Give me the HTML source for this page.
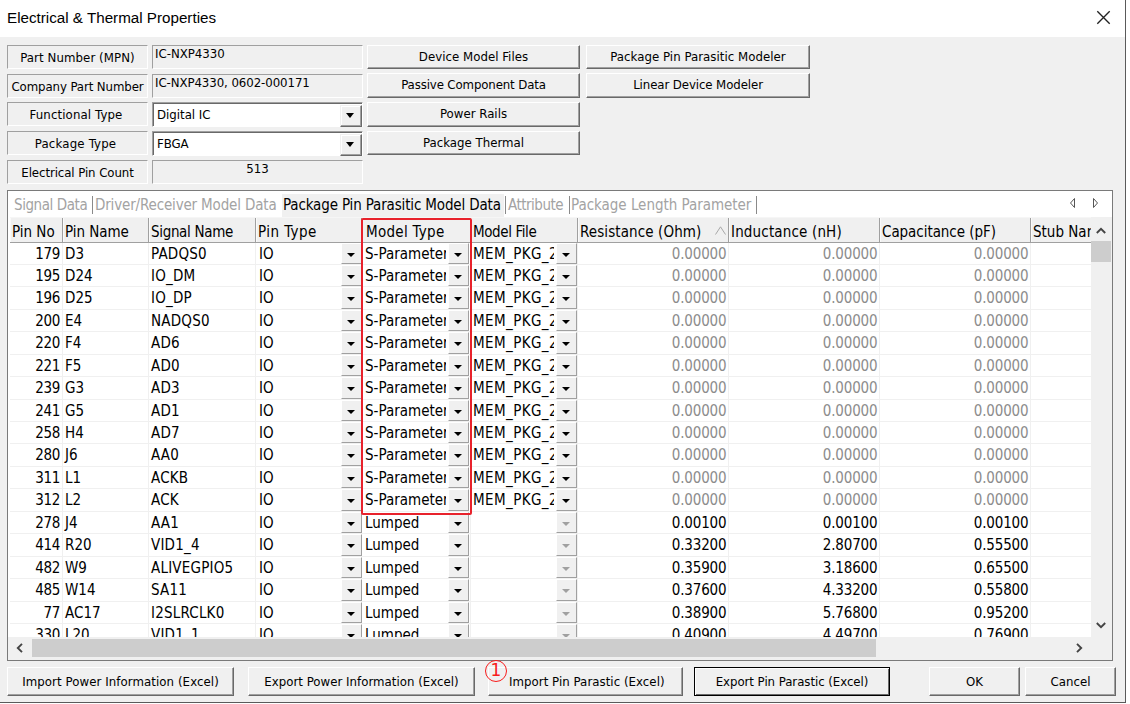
<!DOCTYPE html>
<html lang="en"><head><meta charset="utf-8"><title>Electrical &amp; Thermal Properties</title>
<style>
*{box-sizing:border-box;margin:0;padding:0}
html,body{width:1130px;height:704px;overflow:hidden;background:#fff}
body{position:relative;font-family:"DejaVu Sans Condensed","Liberation Sans",sans-serif;color:#000;font-size:13.1px}
.lbl,.fld,.btn,.combo,.a{position:absolute}
#title{position:absolute;left:0;top:0;width:1125px;height:37px;background:#fff}
#title .t{position:absolute;left:7px;top:8px;font-family:"Liberation Sans",sans-serif;font-size:15.2px;line-height:20px;color:#000;white-space:nowrap}
#client{position:absolute;left:0;top:37px;width:1125px;height:665px;background:#f0f0f0}
#wr{position:absolute;left:1125px;top:0;width:1px;height:703px;background:#5a5a5a}
#wb{position:absolute;left:0;top:702px;width:1126px;height:1px;background:#5a5a5a}
.lbl,.fld{height:24px;border:1px solid;border-color:#a0a0a0 #fff #fff #a0a0a0;background:#f0f0f0;line-height:23px;white-space:nowrap;overflow:hidden}
.lbl{left:7px;width:141px;text-align:center}
.fld{left:152px;width:211px;padding-left:2px;line-height:16px}
.btn{background:#f0f0f0;border:1px solid;border-color:#fff #696969 #696969 #fff;box-shadow:inset -1px -1px 0 #a0a0a0;text-align:center;white-space:nowrap}
.combo{left:152px;width:211px;height:25px;background:#fff;border:1px solid;border-color:#a0a0a0 #fff #fff #a0a0a0;box-shadow:inset 1px 1px 0 #696969;line-height:24px;padding-left:4px;white-space:nowrap}
.combo .cb{position:absolute;right:0;top:2px;width:22px;height:22px;background:#f0f0f0;border:1px solid;border-color:#f0f0f0 #696969 #696969 #f0f0f0;box-shadow:inset -1px -1px 0 #a0a0a0,inset 1px 1px 0 #fff}
.combo .cb:after{content:"";position:absolute;left:5px;top:7px;border:4.5px solid transparent;border-top:5px solid #000;border-bottom:0}
#panel{position:absolute;left:7px;top:190px;width:1106px;height:471px;border:1px solid #7a7a7a;background:#fff}
.tab{position:absolute;top:193px;height:24px;line-height:25px;white-space:nowrap;color:#a3a3a3;font-size:15px}
.tab.sel{color:#000}
#selbg{position:absolute;left:282px;top:194px;width:222px;height:23px;background:#f0f0f0}
.sep{position:absolute;top:196px;width:1px;height:18px;background:#8a8a8a}
#hdr{position:absolute;left:10px;top:218px;width:1081px;height:25px;background:#f0f0f0;box-shadow:0 -1px 0 #f6f6f6;border-bottom:1px solid #a0a0a0;font-size:15px;line-height:28px;white-space:nowrap}
#hdr span.h{position:absolute;top:0;height:24px;border-right:1px solid #a0a0a0;padding-left:2px;overflow:hidden;box-shadow:inset 1px 0 0 #fafafa}
.grid{position:absolute;left:10px;top:243px;width:1081px;height:394px;overflow:hidden;background:#fff;font-size:15px}
.row{position:absolute;left:0;width:1081px;border-bottom:1px solid #f0f0f0;white-space:nowrap}
.c{position:absolute;top:0;height:100%;border-right:1px solid #f0f0f0;padding-left:3px;overflow:hidden}
.c0{left:0;width:53px;text-align:right;padding-right:2px;padding-left:0;letter-spacing:-.3px}
.c1{left:53px;width:86px;padding-left:2px}
.c2{left:139px;width:107px;padding-left:2px;letter-spacing:.2px}
.c3{left:246px;width:106px}
.c4{left:352px;width:109px}
.c5{left:461px;width:107px;padding-left:2px}
.c6{left:568px;width:151px}
.c7{left:719px;width:151px}
.c8{left:870px;width:151px}
.c9{left:1021px;width:60px;border-right:0}
.n{text-align:right;padding-right:1.5px;padding-left:0;letter-spacing:-.15px}
.g{color:#8c8c8c}
.clip{font-weight:normal;display:block;overflow:hidden;width:81px}
.c5 .clip{width:81px;letter-spacing:.4px}
.c4 .dd{right:1px}
.c3{overflow:visible}
.c3 .dd{right:-1px}
.dd{position:absolute;right:0;top:0;width:21px;height:100%;background:#f0f0f0;border-bottom:1px solid #a0a0a0;border-right:1px solid #a0a0a0;border-left:1px solid #fff;border-top:1px solid #fff}
.dd:after{content:"";position:absolute;left:5px;top:8.5px;border:4.5px solid transparent;border-top:4.5px solid #000;border-bottom:0}
.dd.dis:after{border-top-color:#a0a0a0}
#vsb{position:absolute;left:1091px;top:217px;width:21px;height:420px;background:#f0f0f0}
#vsb .th{position:absolute;left:0;top:24px;width:20px;height:21px;background:#cdcdcd}
#hsb{position:absolute;left:8px;top:637px;width:1104px;height:23px;background:#f0f0f0}
#hsb .th{position:absolute;left:24px;top:2px;width:844px;height:18px;background:#cdcdcd}
svg{position:absolute;overflow:visible}
#redbox{position:absolute;left:361px;top:218px;width:111px;height:297px;border:2px solid #e8222c;border-radius:2px}
#circ{position:absolute;left:485px;top:660px;width:22px;height:22px;border:1.6px solid #f81c1c;border-radius:50%;color:#f81c1c;font-size:17px;line-height:19px;text-align:center;font-family:"DejaVu Sans","Liberation Sans",sans-serif}
#under{position:absolute;left:0;top:703px;width:1130px;height:1px;overflow:hidden}

</style></head><body>
<div id="title"><div class="t">Electrical &amp; Thermal Properties</div>
<svg style="left:1097px;top:11px" width="13" height="13" viewBox="0 0 13 13"><path d="M0.3 0.3L12.7 12.7M12.7 0.3L0.3 12.7" stroke="#222" stroke-width="1.35" fill="none"/></svg></div>
<div id="client"></div><div id="wr"></div><div id="wb"></div>
<div class="lbl" style="top:45px"><span style="letter-spacing:0.08px;">Part Number (MPN)</span></div>
<div class="lbl" style="top:74px"><span style="letter-spacing:-0.10px;">Company Part Number</span></div>
<div class="lbl" style="top:102px;padding-right:3px"><span style="letter-spacing:0.12px;">Functional Type</span></div>
<div class="lbl" style="top:131px;padding-right:4px"><span style="letter-spacing:0.18px;">Package Type</span></div>
<div class="lbl" style="top:160px"><span style="letter-spacing:-0.09px;">Electrical Pin Count</span></div>
<div class="fld" style="top:45px"><span style="letter-spacing:-0.01px;">IC-NXP4330</span></div>
<div class="fld" style="top:74px"><span style="letter-spacing:-0.08px;">IC-NXP4330, 0602-000171</span></div>
<div class="combo" style="top:102px"><span style="letter-spacing:-0.01px;">Digital IC</span><i class="cb"></i></div>
<div class="combo" style="top:131px"><span style="letter-spacing:-0.08px;">FBGA</span><i class="cb"></i></div>
<div class="fld" style="top:160px;text-align:center;padding-left:0">513</div>
<div class="btn" style="left:367px;top:45px;width:213px;height:24px;line-height:21px"><span style="letter-spacing:0.02px;">Device Model Files</span></div>
<div class="btn" style="left:367px;top:73px;width:213px;height:25px;line-height:22px"><span style="letter-spacing:-0.13px;">Passive Component Data</span></div>
<div class="btn" style="left:367px;top:102px;width:213px;height:25px;line-height:22px">Power Rails</div>
<div class="btn" style="left:367px;top:131px;width:213px;height:24px;line-height:21px">Package Thermal</div>
<div class="btn" style="left:586px;top:45px;width:224px;height:24px;line-height:21px"><span style="letter-spacing:0.03px;">Package Pin Parasitic Modeler</span></div>
<div class="btn" style="left:586px;top:73px;width:224px;height:25px;line-height:22px"><span style="letter-spacing:-0.10px;">Linear Device Modeler</span></div>
<div id="panel"></div>
<div id="selbg"></div>
<div class="tab" style="left:14px"><span style="letter-spacing:-0.43px;">Signal Data</span></div><div class="sep" style="left:92px"></div>
<div class="tab" style="left:95px"><span style="letter-spacing:-0.16px;">Driver/Receiver Model Data</span></div>
<div class="tab sel" style="left:283px"><span style="letter-spacing:-0.15px;">Package Pin Parasitic Model Data</span></div><div class="sep" style="left:505px"></div>
<div class="tab" style="left:508px"><span style="letter-spacing:-0.50px;">Attribute</span></div><div class="sep" style="left:569px"></div>
<div class="tab" style="left:571px"><span style="letter-spacing:-0.03px;">Package Length Parameter</span></div><div class="sep" style="left:756px"></div>
<svg style="left:1067px;top:198px" width="34" height="10" viewBox="0 0 34 10"><path d="M7.5 0.5L3.5 5L7.5 9.5Z M26.5 0.5L30.5 5L26.5 9.5Z" stroke="#555" stroke-width="1" fill="none"/></svg>
<div id="hdr"><span class="h" style="left:0;width:53px"><span style="letter-spacing:-0.01px;">Pin No</span></span><span class="h" style="left:53px;width:86px"><span style="letter-spacing:-0.05px;">Pin Name</span></span><span class="h" style="left:139px;width:107px"><span style="letter-spacing:-0.33px;">Signal Name</span></span><span class="h" style="left:246px;width:106px"><span style="letter-spacing:0.46px;">Pin Type</span></span><span class="h" style="left:352px;width:109px;padding-left:4px"><span style="letter-spacing:0.30px;">Model Type</span></span><span class="h" style="left:461px;width:107px"><span style="letter-spacing:-0.39px;">Model File</span></span><span class="h" style="left:568px;width:151px"><span style="letter-spacing:0.10px;">Resistance (Ohm)</span></span><span class="h" style="left:719px;width:151px"><span style="letter-spacing:0.16px;">Inductance (nH)</span></span><span class="h" style="left:870px;width:151px"><span style="letter-spacing:-0.05px;">Capacitance (pF)</span></span><span class="h" style="left:1021px;width:60px;border-right:0">Stub Name</span>
<svg style="left:705px;top:8px" width="11" height="9" viewBox="0 0 11 9"><path d="M0.5 8.5L5.5 0.8L10.5 8.5" stroke="#a8a8a8" stroke-width="1" fill="none"/></svg></div>
<div class="grid">
<div class="row" style="top:0px;height:22px;line-height:22px">
<span class="c c0">179</span><span class="c c1">D3</span><span class="c c2">PADQS0</span>
<span class="c c3">IO<i class="dd"></i></span>
<span class="c c4"><b class="clip">S-Parameter</b><i class="dd"></i></span>
<span class="c c5"><b class="clip">MEM_PKG_2</b><i class="dd"></i></span>
<span class="c c6 n g">0.00000</span><span class="c c7 n g">0.00000</span><span class="c c8 n g">0.00000</span>
<span class="c c9"></span>
</div>
<div class="row" style="top:22px;height:22px;line-height:22px">
<span class="c c0">195</span><span class="c c1">D24</span><span class="c c2">IO_DM</span>
<span class="c c3">IO<i class="dd"></i></span>
<span class="c c4"><b class="clip">S-Parameter</b><i class="dd"></i></span>
<span class="c c5"><b class="clip">MEM_PKG_2</b><i class="dd"></i></span>
<span class="c c6 n g">0.00000</span><span class="c c7 n g">0.00000</span><span class="c c8 n g">0.00000</span>
<span class="c c9"></span>
</div>
<div class="row" style="top:44px;height:23px;line-height:23px">
<span class="c c0">196</span><span class="c c1">D25</span><span class="c c2">IO_DP</span>
<span class="c c3">IO<i class="dd"></i></span>
<span class="c c4"><b class="clip">S-Parameter</b><i class="dd"></i></span>
<span class="c c5"><b class="clip">MEM_PKG_2</b><i class="dd"></i></span>
<span class="c c6 n g">0.00000</span><span class="c c7 n g">0.00000</span><span class="c c8 n g">0.00000</span>
<span class="c c9"></span>
</div>
<div class="row" style="top:67px;height:22px;line-height:22px">
<span class="c c0">200</span><span class="c c1">E4</span><span class="c c2">NADQS0</span>
<span class="c c3">IO<i class="dd"></i></span>
<span class="c c4"><b class="clip">S-Parameter</b><i class="dd"></i></span>
<span class="c c5"><b class="clip">MEM_PKG_2</b><i class="dd"></i></span>
<span class="c c6 n g">0.00000</span><span class="c c7 n g">0.00000</span><span class="c c8 n g">0.00000</span>
<span class="c c9"></span>
</div>
<div class="row" style="top:89px;height:23px;line-height:23px">
<span class="c c0">220</span><span class="c c1">F4</span><span class="c c2">AD6</span>
<span class="c c3">IO<i class="dd"></i></span>
<span class="c c4"><b class="clip">S-Parameter</b><i class="dd"></i></span>
<span class="c c5"><b class="clip">MEM_PKG_2</b><i class="dd"></i></span>
<span class="c c6 n g">0.00000</span><span class="c c7 n g">0.00000</span><span class="c c8 n g">0.00000</span>
<span class="c c9"></span>
</div>
<div class="row" style="top:112px;height:22px;line-height:22px">
<span class="c c0">221</span><span class="c c1">F5</span><span class="c c2">AD0</span>
<span class="c c3">IO<i class="dd"></i></span>
<span class="c c4"><b class="clip">S-Parameter</b><i class="dd"></i></span>
<span class="c c5"><b class="clip">MEM_PKG_2</b><i class="dd"></i></span>
<span class="c c6 n g">0.00000</span><span class="c c7 n g">0.00000</span><span class="c c8 n g">0.00000</span>
<span class="c c9"></span>
</div>
<div class="row" style="top:134px;height:23px;line-height:23px">
<span class="c c0">239</span><span class="c c1">G3</span><span class="c c2">AD3</span>
<span class="c c3">IO<i class="dd"></i></span>
<span class="c c4"><b class="clip">S-Parameter</b><i class="dd"></i></span>
<span class="c c5"><b class="clip">MEM_PKG_2</b><i class="dd"></i></span>
<span class="c c6 n g">0.00000</span><span class="c c7 n g">0.00000</span><span class="c c8 n g">0.00000</span>
<span class="c c9"></span>
</div>
<div class="row" style="top:157px;height:22px;line-height:22px">
<span class="c c0">241</span><span class="c c1">G5</span><span class="c c2">AD1</span>
<span class="c c3">IO<i class="dd"></i></span>
<span class="c c4"><b class="clip">S-Parameter</b><i class="dd"></i></span>
<span class="c c5"><b class="clip">MEM_PKG_2</b><i class="dd"></i></span>
<span class="c c6 n g">0.00000</span><span class="c c7 n g">0.00000</span><span class="c c8 n g">0.00000</span>
<span class="c c9"></span>
</div>
<div class="row" style="top:179px;height:22px;line-height:22px">
<span class="c c0">258</span><span class="c c1">H4</span><span class="c c2">AD7</span>
<span class="c c3">IO<i class="dd"></i></span>
<span class="c c4"><b class="clip">S-Parameter</b><i class="dd"></i></span>
<span class="c c5"><b class="clip">MEM_PKG_2</b><i class="dd"></i></span>
<span class="c c6 n g">0.00000</span><span class="c c7 n g">0.00000</span><span class="c c8 n g">0.00000</span>
<span class="c c9"></span>
</div>
<div class="row" style="top:201px;height:23px;line-height:23px">
<span class="c c0">280</span><span class="c c1">J6</span><span class="c c2">AA0</span>
<span class="c c3">IO<i class="dd"></i></span>
<span class="c c4"><b class="clip">S-Parameter</b><i class="dd"></i></span>
<span class="c c5"><b class="clip">MEM_PKG_2</b><i class="dd"></i></span>
<span class="c c6 n g">0.00000</span><span class="c c7 n g">0.00000</span><span class="c c8 n g">0.00000</span>
<span class="c c9"></span>
</div>
<div class="row" style="top:224px;height:22px;line-height:22px">
<span class="c c0">311</span><span class="c c1">L1</span><span class="c c2">ACKB</span>
<span class="c c3">IO<i class="dd"></i></span>
<span class="c c4"><b class="clip">S-Parameter</b><i class="dd"></i></span>
<span class="c c5"><b class="clip">MEM_PKG_2</b><i class="dd"></i></span>
<span class="c c6 n g">0.00000</span><span class="c c7 n g">0.00000</span><span class="c c8 n g">0.00000</span>
<span class="c c9"></span>
</div>
<div class="row" style="top:246px;height:23px;line-height:23px">
<span class="c c0">312</span><span class="c c1">L2</span><span class="c c2">ACK</span>
<span class="c c3">IO<i class="dd"></i></span>
<span class="c c4"><b class="clip">S-Parameter</b><i class="dd"></i></span>
<span class="c c5"><b class="clip">MEM_PKG_2</b><i class="dd"></i></span>
<span class="c c6 n g">0.00000</span><span class="c c7 n g">0.00000</span><span class="c c8 n g">0.00000</span>
<span class="c c9"></span>
</div>
<div class="row" style="top:269px;height:22px;line-height:22px">
<span class="c c0">278</span><span class="c c1">J4</span><span class="c c2">AA1</span>
<span class="c c3">IO<i class="dd"></i></span>
<span class="c c4">Lumped<i class="dd"></i></span>
<span class="c c5"><i class="dd dis"></i></span>
<span class="c c6 n">0.00100</span><span class="c c7 n">0.00100</span><span class="c c8 n">0.00100</span>
<span class="c c9"></span>
</div>
<div class="row" style="top:291px;height:23px;line-height:23px">
<span class="c c0">414</span><span class="c c1">R20</span><span class="c c2">VID1_4</span>
<span class="c c3">IO<i class="dd"></i></span>
<span class="c c4">Lumped<i class="dd"></i></span>
<span class="c c5"><i class="dd dis"></i></span>
<span class="c c6 n">0.33200</span><span class="c c7 n">2.80700</span><span class="c c8 n">0.55500</span>
<span class="c c9"></span>
</div>
<div class="row" style="top:314px;height:22px;line-height:22px">
<span class="c c0">482</span><span class="c c1">W9</span><span class="c c2">ALIVEGPIO5</span>
<span class="c c3">IO<i class="dd"></i></span>
<span class="c c4">Lumped<i class="dd"></i></span>
<span class="c c5"><i class="dd dis"></i></span>
<span class="c c6 n">0.35900</span><span class="c c7 n">3.18600</span><span class="c c8 n">0.65500</span>
<span class="c c9"></span>
</div>
<div class="row" style="top:336px;height:23px;line-height:23px">
<span class="c c0">485</span><span class="c c1">W14</span><span class="c c2">SA11</span>
<span class="c c3">IO<i class="dd"></i></span>
<span class="c c4">Lumped<i class="dd"></i></span>
<span class="c c5"><i class="dd dis"></i></span>
<span class="c c6 n">0.37600</span><span class="c c7 n">4.33200</span><span class="c c8 n">0.55800</span>
<span class="c c9"></span>
</div>
<div class="row" style="top:359px;height:22px;line-height:22px">
<span class="c c0">77</span><span class="c c1">AC17</span><span class="c c2">I2SLRCLK0</span>
<span class="c c3">IO<i class="dd"></i></span>
<span class="c c4">Lumped<i class="dd"></i></span>
<span class="c c5"><i class="dd dis"></i></span>
<span class="c c6 n">0.38900</span><span class="c c7 n">5.76800</span><span class="c c8 n">0.95200</span>
<span class="c c9"></span>
</div>
<div class="row" style="top:381px;height:22px;line-height:22px">
<span class="c c0">330</span><span class="c c1">L20</span><span class="c c2">VID1_1</span>
<span class="c c3">IO<i class="dd"></i></span>
<span class="c c4">Lumped<i class="dd"></i></span>
<span class="c c5"><i class="dd dis"></i></span>
<span class="c c6 n">0.40900</span><span class="c c7 n">4.49700</span><span class="c c8 n">0.76900</span>
<span class="c c9"></span>
</div>
</div><div id="vsb"><div class="th"></div>
<svg style="left:5px;top:10px" width="10" height="7" viewBox="0 0 10 7"><path d="M0.8 6L5 1.8L9.2 6" stroke="#444" stroke-width="1.9" fill="none"/></svg>
<svg style="left:5px;top:405px" width="10" height="7" viewBox="0 0 10 7"><path d="M0.8 1L5 5.2L9.2 1" stroke="#444" stroke-width="1.9" fill="none"/></svg></div>
<div id="hsb"><div class="th"></div>
<svg style="left:8px;top:6px" width="7" height="10" viewBox="0 0 7 10"><path d="M6 0.8L1.8 5L6 9.2" stroke="#444" stroke-width="1.9" fill="none"/></svg>
<svg style="left:1068px;top:6px" width="7" height="10" viewBox="0 0 7 10"><path d="M1 0.8L5.2 5L1 9.2" stroke="#444" stroke-width="1.9" fill="none"/></svg></div>
<div id="redbox"></div>
<div class="btn" style="left:7px;top:667px;width:227px;height:29px;line-height:27px"><span style="letter-spacing:0.07px;">Import Power Information (Excel)</span></div>
<div class="btn" style="left:248px;top:667px;width:227px;height:29px;line-height:27px"><span style="letter-spacing:0.02px;">Export Power Information (Excel)</span></div>
<div class="btn" style="left:488px;top:667px;width:195px;height:29px;line-height:27px;text-align:left;padding-left:20px"><span style="letter-spacing:0.04px;">Import Pin Parastic (Excel)</span></div>
<div class="btn" style="left:694px;top:667px;width:196px;height:29px;line-height:27px;border-color:#000;box-shadow:inset 1px 1px 0 #fff,inset -1px -1px 0 #696969"><span style="letter-spacing:-0.05px;">Export Pin Parastic (Excel)</span></div>
<div class="btn" style="left:929px;top:667px;width:91px;height:29px;line-height:27px">OK</div>
<div class="btn" style="left:1025px;top:667px;width:91px;height:29px;line-height:27px">Cancel</div>
<div id="circ">1</div>

</body></html>
